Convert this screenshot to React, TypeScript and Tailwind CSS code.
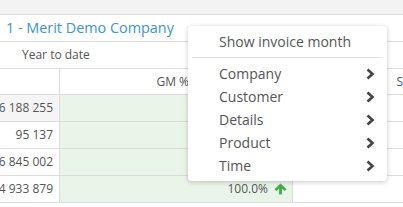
import React from 'react';

const rows = ['6 188 255', '95 137', '6 845 002', '4 933 879'];
const menuItems = ['Company', 'Customer', 'Details', 'Product', 'Time'];

const Chevron = () => (
  <svg width="10" height="12" viewBox="0 0 10 12" className="text-[#444]">
    <path d="M2.5 1.5 L7.5 6 L2.5 10.5" fill="none" stroke="currentColor" strokeWidth="2.6" strokeLinejoin="miter" />
  </svg>
);

const ArrowUp = () => (
  <svg width="13" height="12" viewBox="0 0 13 12" className="text-[#3fae49]">
    <path d="M6.5 0.5 L12.5 6.2 L10.6 8 L7.9 5.4 L7.9 11.5 L5.1 11.5 L5.1 5.4 L2.4 8 L0.5 6.2 Z" fill="currentColor" />
  </svg>
);

export default function App() {
  return (
    <div className="relative w-[403px] h-[207px] overflow-hidden bg-white text-[#555] font-['Open_Sans',sans-serif]">
      <div className="h-[15px] bg-[#f3f3f3] border-b border-[#dcdcdc]" />
      <div className="h-[27px] flex items-center pl-[6px] border-b border-[#dcdcdc]">
        <span className="text-[14.4px] text-[#3b93d8]">1 - Merit Demo Company</span>
      </div>
      <div className="h-[27px] flex items-center pl-[22px] border-b border-[#dcdcdc] text-[12px]">
        Year to date
      </div>
      <div className="flex h-[26px] border-b border-[#dcdcdc] text-[12px]">
        <div className="w-[60px] border-r border-[#dcdcdc]" />
        <div className="w-[233px] border-r border-[#dcdcdc] flex items-center justify-end pr-[103px]">GM %</div>
        <div className="flex-1 flex items-center justify-end pr-0">S</div>
      </div>
      {rows.map((r, i) => (
        <div key={r} className="flex h-[27px] border-b border-[#dcdcdc] text-[12px]">
          <div className={`w-[60px] border-r border-[#dcdcdc] flex items-center justify-end pr-[6px] whitespace-nowrap ${i === 0 ? 'bg-[#f5f5f5]' : ''}`}>
            {r}
          </div>
          <div className="w-[233px] border-r border-[#dcdcdc] bg-[#e9f5e9] flex items-center justify-end pr-[5px] gap-[6px]">
            {i === 3 && (
              <>
                <span>100.0%</span>
                <ArrowUp />
              </>
            )}
          </div>
          <div className="flex-1" />
        </div>
      ))}

      <div className="absolute left-[188px] top-[26px] w-[199px] bg-white rounded-[4px] shadow-[0_1px_5px_rgba(0,0,0,0.22)] pt-[3px] pb-[4px] text-[14px] text-[#555]">
        <div className="h-[24px] flex items-center pl-[31px]">Show invoice month</div>
        <div className="mx-[4px] mt-[4px] mb-[4px] border-t border-[#e2e2e2]" />
        {menuItems.map((m) => (
          <div key={m} className="h-[23px] flex items-center justify-between pl-[31px] pr-[12px]">
            <span>{m}</span>
            <Chevron />
          </div>
        ))}
      </div>
    </div>
  );
}
